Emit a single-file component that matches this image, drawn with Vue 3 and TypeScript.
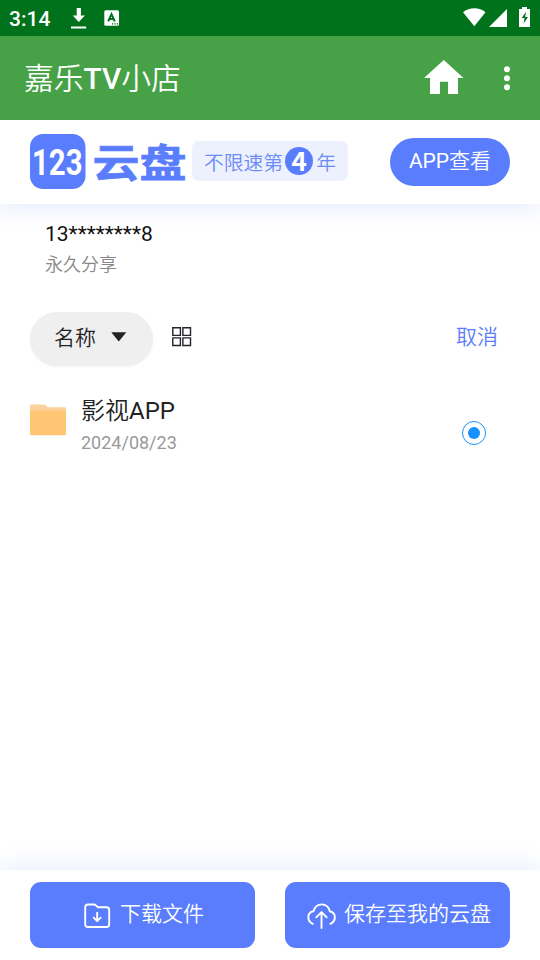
<script setup lang="ts">
import { ref } from 'vue'

interface ShareFile {
  name: string
  date: string
}

const owner = '13********8'
const files: ShareFile[] = [{ name: '影视APP', date: '2024/08/23' }]
const selected = ref<number>(0)
</script>

<template>
  <div class="screen">
    <div class="status">
      <span class="clock">3:14</span>
      <svg class="dl" width="16" height="21" viewBox="0 0 16 21">
        <path d="M5.700 0h4.200v7.600h4L7.800 14 1.800 7.600h3.900zM0 18.500h15.200v1.900H0z" fill="#fff" />
      </svg>
      <svg class="key" width="16" height="16" viewBox="0 0 16 16">
        <rect x=".3" y=".3" width="14.700" height="15.400" rx="1.500" fill="#fff" />
        <path d="M4.200 11.300 7.500 4.200 10.800 11.300M5.600 9H9.400" fill="none" stroke="#00721b" stroke-width="2" />
        <path d="M8 13.900h1.300M10.400 13.900h1.300M12.800 13.900h1.300" stroke="#00721b" stroke-width="1.200" />
      </svg>
      <span class="grow"></span>
      <svg class="wifi" width="24" height="19" viewBox="0 0 24 19">
        <path d="M0 4.300C6.500-1.200 16.500-1.200 22.500 4.300L11.300 18.300z" fill="#fff" />
      </svg>
      <svg class="signal" width="19" height="19" viewBox="0 0 19 19"><path d="M18 0v18H0z" fill="#fff" /></svg>
      <svg class="battery" width="12" height="21" viewBox="0 0 12 21">
        <path d="M3 0h5v2h3v18H0V2h3z" fill="#fff" />
        <path d="M7 4.800 2.700 11h2.800l-.9 5.600L9 9.900H6.200z" fill="#00721b" />
      </svg>
    </div>

    <header class="appbar">
      <h1>嘉乐<b>TV</b>小店</h1>
      <svg class="home" width="40" height="35" viewBox="0 0 40 35">
        <path d="M19.800 0 39.500 18H34v16H24V21.800h-8V34H6V18H0z" fill="#fff" />
      </svg>
      <svg class="more" width="6" height="25" viewBox="0 0 6 25">
        <g fill="#fff"><circle cx="3" cy="3.200" r="3" /><circle cx="3" cy="12.200" r="3" /><circle cx="3" cy="21.200" r="3" /></g>
      </svg>
    </header>

    <section class="brand">
      <svg class="logo" width="158" height="56" viewBox="0 0 158 56">
        <rect x="0" y="0" width="55.500" height="55" rx="13" fill="#597dfc" />
        <text class="digits" x="2" y="41" textLength="50.500" lengthAdjust="spacingAndGlyphs">123</text>
        <text class="pan" x="62.500" y="42.500" textLength="94" lengthAdjust="spacingAndGlyphs">云盘</text>
      </svg>
      <div class="slogan">不限速第<i>4</i>年</div>
      <button class="open">APP查看</button>
    </section>

    <main>
      <div class="owner">{{ owner }}</div>
      <div class="expire">永久分享</div>

      <div class="tools">
        <button class="sort">
          <span>名称</span>
          <svg width="16" height="10" viewBox="0 0 16 10"><path d="M.3.3h15L7.800 9.400z" fill="#222" /></svg>
        </button>
        <svg class="grid" width="20" height="20" viewBox="0 0 20 20">
          <path d="M.8.8h7.600v7.600H.8zM10.900.8h7.600v7.600h-7.600zM.8 10.900h7.600v7.600H.8zM10.900 10.900h7.600v7.600h-7.600z" fill="none" stroke="#22242a" stroke-width="1.400" />
        </svg>
        <button class="cancel">取消</button>
      </div>

      <div v-for="(file, i) in files" :key="file.name" class="file" @click="selected = i">
        <svg class="folder" width="36" height="32" viewBox="0 0 36 32">
          <path d="M1.500.5h12.200q1.200 0 2 .8l2 1.900h16.800q1.500 0 1.500 1.500V12H0V2Q0 .5 1.500.5z" fill="#fbd29b" />
          <path d="M0 6.500h36V29.800q0 1.500-1.500 1.500h-33Q0 31.300 0 29.800z" fill="#ffc673" />
        </svg>
        <div class="meta">
          <div class="name">{{ file.name }}</div>
          <div class="date">{{ file.date }}</div>
        </div>
        <span class="radio" :class="{ on: selected === i }"></span>
      </div>
    </main>

    <footer>
      <button class="action">
        <svg class="fdown" width="27" height="26" viewBox="0 0 27 26" fill="none" stroke="#fff" stroke-width="1.900" stroke-linecap="round" stroke-linejoin="round">
          <path d="M4 1.500h6.200q.8 0 1.400.6L14 4.200h8.500Q25.200 4.200 25.200 7v14.200q0 2.800-2.800 2.800H4q-2.800 0-2.800-2.800V4.300Q1.200 1.500 4 1.500z" />
          <path d="M13.200 9.800v8M9.700 14.600l3.500 3.500 3.500-3.500" />
        </svg>
        下载文件
      </button>
      <button class="action save">
        <svg class="cloud" width="29" height="26" viewBox="0 0 29 26" fill="none" stroke="#fff" stroke-width="1.900" stroke-linecap="round" stroke-linejoin="round">
          <path d="M5.700 20.800C-.2 17.800-.3 9.500 6.500 8.300 9-.9 20.500-.9 22.800 8.300c6.500 1.500 6.700 9.500.7 12.500" />
          <path d="M14.500 25V9.500M9.300 14.300l5.200-5.200 5.200 5.200" />
        </svg>
        保存至我的云盘
      </button>
    </footer>
  </div>
</template>

<style>
body {
  background: #fff;
}
</style>

<style scoped>
.screen {
  width: 540px;
  height: 960px;
  display: flex;
  flex-direction: column;
  overflow: hidden;
  background: #fff;
  font-family: Roboto, "Noto Sans CJK SC DemiLight", "Noto Sans CJK SC", sans-serif;
}
svg {
  display: block;
  flex: none;
}
button {
  border: 0;
  margin: 0;
  padding: 0;
  background: none;
  font-family: inherit;
}
.status {
  height: 36px;
  background: #00721b;
  display: flex;
  align-items: flex-start;
  padding: 0 9px 0 9px;
  color: #fff;
}
.clock {
  width: 62px;
  font-size: 21px;
  font-weight: 500;
  line-height: 38px;
}
.dl {
  margin-top: 8px;
}
.key {
  margin: 10px 0 0 17px;
}
.grow {
  flex: 1;
}
.wifi {
  margin-top: 8px;
}
.signal {
  margin: 9px 11px 0 2px;
}
.battery {
  margin-top: 7px;
}
.appbar {
  position: relative;
  z-index: 1;
  height: 84px;
  background: #46a147;
  display: flex;
  align-items: center;
  padding: 0 30px 0 24px;
  color: #fff;
}
h1 {
  flex: 1;
  margin: 0;
  padding-top: 1px;
  font-size: 29.8px;
  font-weight: 400;
  line-height: 83px;
}
h1 b {
  font-weight: 500;
}
.home {
  margin: -2px 40px 0 0;
}
.brand {
  position: relative;
  height: 84px;
  flex: none;
  display: flex;
  align-items: center;
  padding: 0 30px;
  box-shadow: 0 3px 22px rgba(89, 125, 252, 0.17);
}
.logo {
  margin-top: -1px;
  overflow: visible;
}
.digits {
  font: 700 37px Roboto, sans-serif;
  fill: #fff;
}
.pan {
  font: 700 39px "Noto Sans CJK SC", sans-serif;
  fill: #597dfc;
  stroke: #597dfc;
  stroke-width: 0.7px;
}
.slogan {
  width: 156px;
  height: 40px;
  margin: -2px 0 0 4px;
  box-sizing: border-box;
  padding-left: 12px;
  display: flex;
  align-items: center;
  border-radius: 7px;
  background: #edf1fe;
  color: #6c8bf7;
  font-size: 19.8px;
}
.slogan i {
  width: 28px;
  height: 28px;
  margin: 0 3px 0 2px;
  border-radius: 50%;
  background: #597dfc;
  color: #fff;
  font: 700 26px/26px "Noto Sans CJK SC", sans-serif;
  text-align: center;
}
.open {
  width: 120px;
  height: 48px;
  margin-left: auto;
  padding-bottom: 6px;
  border-radius: 24px;
  background: #597dfc;
  color: #fff;
  font-size: 21px;
}
main {
  flex: 1;
  padding: 15px 30px 0;
}
.owner {
  padding-left: 15px;
  font-size: 21px;
  line-height: 30px;
  color: #111;
}
.expire {
  padding: 1px 0 0 15px;
  font-size: 18px;
  line-height: 30px;
  color: #888;
}
.tools {
  margin-top: 32px;
  height: 54px;
  display: flex;
  align-items: center;
}
.sort {
  width: 123px;
  height: 54px;
  border-radius: 27px;
  background: #efefef;
  box-shadow: 0 1px 3px rgba(0, 0, 0, 0.05);
  display: flex;
  align-items: center;
  padding: 0 0 5px 24px;
  box-sizing: border-box;
  gap: 15px;
  font-size: 21px;
  color: #222;
}
.sort span {
  margin-top: -2px;
}
.grid {
  margin: -5px 0 0 19px;
}
.cancel {
  margin: -8px 12px 0 auto;
  font-size: 21px;
  color: #597dfc;
}
.file {
  margin-top: 27px;
  display: flex;
  align-items: flex-start;
}
.folder {
  margin-top: 11px;
}
.meta {
  margin-left: 15px;
  flex: 1;
}
.name {
  font-size: 24px;
  line-height: 36px;
  color: #222;
}
.date {
  font-size: 18px;
  line-height: 28px;
  color: #999;
}
.radio {
  width: 24px;
  height: 24px;
  margin: 28px 24px 0 0;
  box-sizing: border-box;
  border: 1px solid #1890ff;
  border-radius: 50%;
  display: grid;
  place-items: center;
}
.radio.on::after {
  content: "";
  width: 12px;
  height: 12px;
  border-radius: 50%;
  background: #1890ff;
}
footer {
  position: relative;
  height: 90px;
  flex: none;
  box-sizing: border-box;
  padding: 12px 30px;
  display: grid;
  grid-template-columns: 225px 225px;
  gap: 30px;
  background: #fff;
  box-shadow: 0 -3px 22px rgba(89, 125, 252, 0.14);
}
.action {
  height: 66px;
  border-radius: 11px;
  background: #597dfc;
  color: #fff;
  display: flex;
  align-items: center;
  padding: 0 0 7px 54px;
  font-size: 21px;
  white-space: nowrap;
}
.action.save {
  padding-left: 22px;
}
.fdown {
  margin: 8px 9px 0 0;
}
.cloud {
  margin: 8px 8px 0 0;
}
</style>
